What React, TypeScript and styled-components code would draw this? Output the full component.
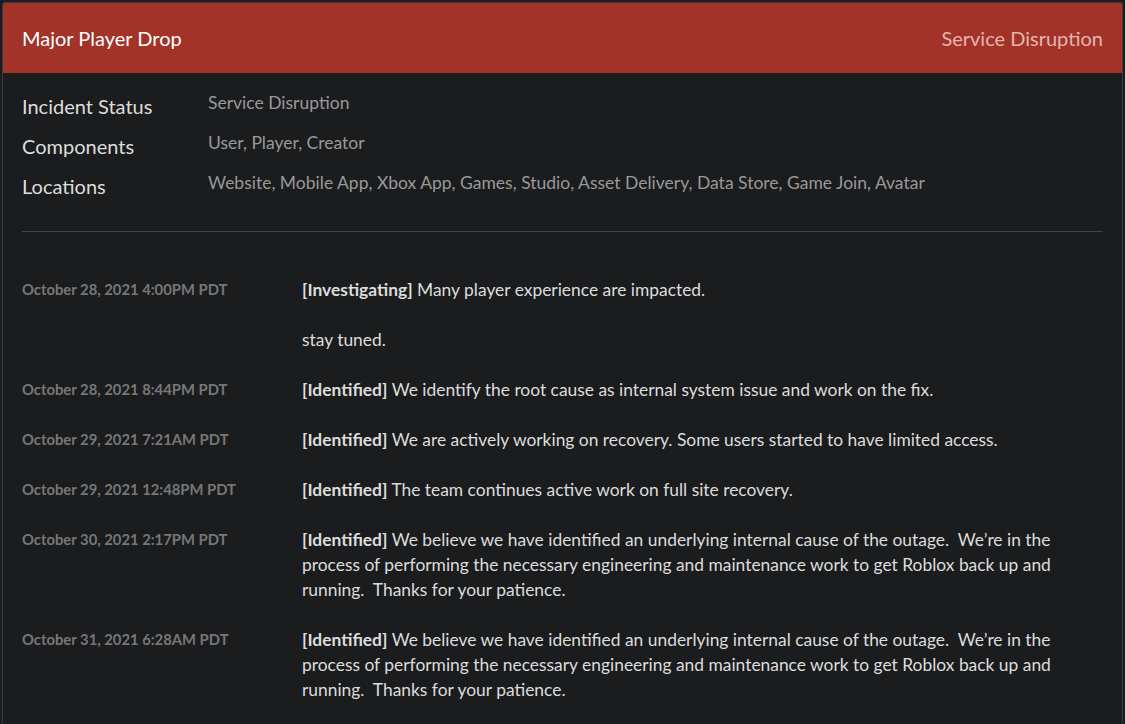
import React from 'react'
import styled, { createGlobalStyle } from 'styled-components'

const Global = createGlobalStyle`
body { margin:0; background:#1b1c1e; font-family: Lato, "Open Sans", sans-serif; }
`
const Card = styled.div`
margin:2px;
border:1px solid #3a3c3f;
border-bottom:none;
border-radius:3px 3px 0 0;
background:#1b1c1e;
height:720px;
overflow:hidden;
`
const Header = styled.div`
background:#a33328;
height:70px;
display:flex;
align-items:center;
justify-content:space-between;
padding:0 19px;
font-size:20px;
color:#fff;
`
const HeaderStatus = styled.span`color:#e4b5b0;`
const Info = styled.div`
margin:0 19px;
padding:13px 0 25px;
border-bottom:1px solid #444;
display:grid;
grid-template-columns:186px 1fr;
`
const Label = styled.div`font-size:20px;color:#ddd;line-height:40px;height:40px;`
const Value = styled.div`font-size:17.5px;color:#999;line-height:40px;height:40px;margin-top:-3px;`
const Updates = styled.div`
margin:0 19px;
padding-top:45px;
display:flex;
flex-direction:column;
gap:25px;
`
const Row = styled.div`
display:grid;
grid-template-columns:280px 1fr;
`
const Date = styled.div`font-size:14.8px;font-weight:bold;color:#777;line-height:25px;`
const Msg = styled.div`
font-size:17.4px;color:#ddd;line-height:25px;
p{margin:0 0 25px;}
p:last-child{margin:0;}
b{font-weight:bold;}
`

const updates: [string, string, string, string[]][] = [
  ['October 28, 2021 4:00PM PDT', 'Investigating', 'Many player experience are impacted.', ['stay tuned.']],
  ['October 28, 2021 8:44PM PDT', 'Identified', 'We identify the root cause as internal system issue and work on the fix.', []],
  ['October 29, 2021 7:21AM PDT', 'Identified', 'We are actively working on recovery. Some users started to have limited access.', []],
  ['October 29, 2021 12:48PM PDT', 'Identified', 'The team continues active work on full site recovery.', []],
  ['October 30, 2021 2:17PM PDT', 'Identified', 'We believe we have identified an underlying internal cause of the outage.\u00a0 We\u2019re in the process of performing the necessary engineering and maintenance work to get Roblox back up and running.\u00a0 Thanks for your patience.', []],
  ['October 31, 2021 6:28AM PDT', 'Identified', 'We believe we have identified an underlying internal cause of the outage.\u00a0 We\u2019re in the process of performing the necessary engineering and maintenance work to get Roblox back up and running.\u00a0 Thanks for your patience.', []],
]

export default function App() {
  return (
    <>
      <Global />
      <Card>
        <Header>
          <span>Major Player Drop</span>
          <HeaderStatus>Service Disruption</HeaderStatus>
        </Header>
        <Info>
          <Label>Incident Status</Label><Value>Service Disruption</Value>
          <Label>Components</Label><Value>User, Player, Creator</Value>
          <Label>Locations</Label><Value>Website, Mobile App, Xbox App, Games, Studio, Asset Delivery, Data Store, Game Join, Avatar</Value>
        </Info>
        <Updates>
          {updates.map(([d, tag, text, extra]) => (
            <Row key={d}>
              <Date>{d}</Date>
              <Msg>
                <p><b>[{tag}]</b> {text}</p>
                {extra.map(e => <p key={e}>{e}</p>)}
              </Msg>
            </Row>
          ))}
        </Updates>
      </Card>
    </>
  )
}
